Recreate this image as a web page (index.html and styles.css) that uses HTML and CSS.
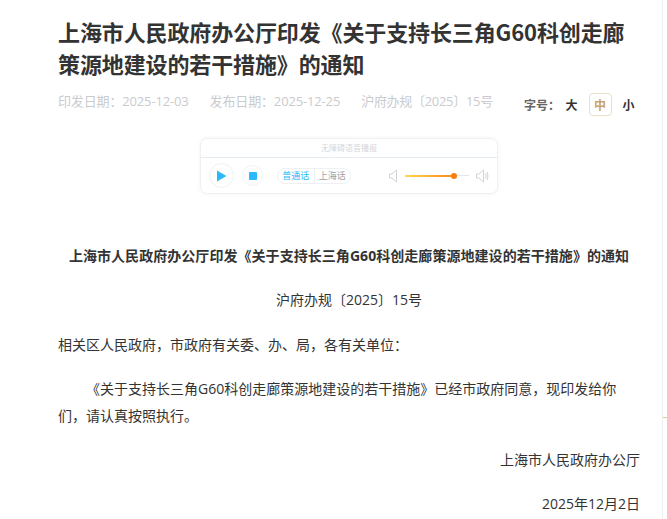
FILE: index.html
```html
<!DOCTYPE html>
<html lang="zh">
<head>
<meta charset="utf-8">
<title>通知</title>
<link rel="stylesheet" href="styles.css">
</head>
<body>
<main class="page">
  <h1 class="title">上海市人民政府办公厅印发《关于支持长三角G60科创走廊策源地建设的若干措施》的通知</h1>
  <div class="meta">
    <div class="dates">
      <span>印发日期：2025-12-03</span>
      <span>发布日期：2025-12-25</span>
      <span class="doc-no">沪府办规〔2025〕15号</span>
    </div>
    <div class="size">
      <span class="size-label">字号：</span>
      <span class="size-opt">大</span>
      <span class="size-opt active">中</span>
      <span class="size-opt">小</span>
    </div>
  </div>
  <section class="player">
    <div class="player-head">无障碍语音播报</div>
    <div class="player-body">
      <button class="round play" aria-label="播放"><svg width="11" height="12" viewBox="0 0 11 12"><path d="M1 0.5L10.5 6L1 11.5Z" fill="#2bb9fb"/></svg></button>
      <button class="round stop" aria-label="停止"><svg width="8" height="8" viewBox="0 0 8 8"><rect width="8" height="8" rx="1" fill="#2bb9fb"/></svg></button>
      <div class="lang"><span class="lang-opt on">普通话</span><span class="lang-opt">上海话</span></div>
      <div class="volume">
        <svg class="spk" width="9" height="14" viewBox="0 0 9 14"><path d="M0.5 5H3L7.5 1V13L3 9H0.5Z" fill="none" stroke="#cfd3d8"/></svg>
        <div class="track"><div class="fill"></div><div class="knob"></div></div>
        <svg class="spk" width="13" height="14" viewBox="0 0 13 14"><path d="M0.5 5H3L7.5 1V13L3 9H0.5Z" fill="none" stroke="#cfd3d8"/><path d="M9.5 4.5Q11 7 9.5 9.5M11 3Q13 7 11 11" fill="none" stroke="#cfd3d8"/></svg>
      </div>
    </div>
  </section>
  <article class="doc">
    <h2 class="doc-title">上海市人民政府办公厅印发《关于支持长三角G60科创走廊策源地建设的若干措施》的通知</h2>
    <p class="center">沪府办规〔2025〕15号</p>
    <p class="lead">相关区人民政府，市政府有关委、办、局，各有关单位：</p>
    <p class="indent">《关于支持长三角G60科创走廊策源地建设的若干措施》已经市政府同意，现印发给你们，请认真按照执行。</p>
    <p class="right">上海市人民政府办公厅</p>
    <p class="right">2025年12月2日</p>
  </article>
</main>
<div class="edge"><div class="edge-mark"></div></div>
</body>
</html>
```
FILE: styles.css
```css
* { box-sizing: border-box; }
html, body { margin: 0; padding: 0; height: 519px; overflow: hidden; background: #fff; }
body { font-family: "Noto Sans CJK SC", "Liberation Sans", sans-serif; color: #333; }
.page { width: 582px; margin-left: 58px; padding-top: 15px; }
.title { margin: 0; font-size: 22px; line-height: 32px; font-weight: 700; color: #333; letter-spacing: -0.12px; }
.meta { display: flex; justify-content: space-between; align-items: flex-start; margin-top: 12px; height: 28px; }
.dates { display: flex; gap: 21px; font-size: 13px; line-height: 20px; color: #c9cbce; letter-spacing: -0.15px; font-family: "Open Sans", "Noto Sans CJK SC", sans-serif; }
.doc-no { letter-spacing: -0.3px; }
.size { display: flex; align-items: center; font-size: 12px; margin-top: 2px; }
.size-label { color: #666; font-weight: 700; }
.size-opt { width: 23px; height: 23px; display: flex; align-items: center; justify-content: center; font-weight: 700; color: #333; border: 1px solid transparent; border-radius: 4px; }
.size-opt + .size-opt { margin-left: 5.5px; }
.size-opt.active { color: #c9a468; border-color: #eadfc9; }
.player { width: 298px; height: 56px; margin: 19px 0 0 142px; border: 1px solid #eef0f3; border-radius: 7px; box-shadow: 0 0 4px rgba(0,0,0,0.05); }
.player-head { height: 19px; border-bottom: 1px solid #e4ebf2; font-size: 8px; line-height: 18px; color: #d4d6dc; text-align: center; }
.player-body { display: flex; align-items: center; height: 35px; padding-left: 8px; }
.round { display: flex; align-items: center; justify-content: center; padding: 0; background: #fff; border: 1px solid #eef1f4; border-radius: 50%; }
.play { width: 25px; height: 25px; }
.stop { width: 21px; height: 21px; margin-left: 8px; }
.lang { display: flex; margin-left: 14px; width: 74px; height: 16px; border: 1px solid #eef1f4; border-radius: 8px; font-size: 9px; line-height: 14px; }
.lang-opt { flex: 1; text-align: center; color: #9ca1a8; }
.lang-opt.on { color: #2bb9fb; border-right: 1px solid #eef1f4; }
.volume { display: flex; align-items: center; margin-left: 38px; }
.track { position: relative; width: 64px; height: 1px; margin: 0 7px; background: #e3e5e8; }
.fill { width: 49px; height: 2px; background: linear-gradient(90deg, #ffd84f, #fb8a1c); }
.knob { position: absolute; left: 46px; top: -2px; width: 6px; height: 6px; border-radius: 50%; background: #f97d12; }
.doc { margin-top: 48px; font-size: 14px; line-height: 27px; color: #333; font-family: "Open Sans", "Noto Sans CJK SC", sans-serif; }
.doc-title { margin: 0; font-size: 14px; line-height: 27px; font-weight: 700; text-align: center; letter-spacing: 0.05px; }
.doc p { margin: 17px 0 0; }
.doc .center { text-align: center; }
.doc .lead { margin-top: 18px; }
.doc .indent { text-indent: 28px; }
.doc .right { text-align: right; }
.edge { position: absolute; top: 0; left: 662px; width: 5px; height: 519px; border-left: 1px solid #eeeeee; }
.edge-mark { position: absolute; top: 417px; left: 0; width: 5px; height: 1px; background: #d9c9a0; }
```
